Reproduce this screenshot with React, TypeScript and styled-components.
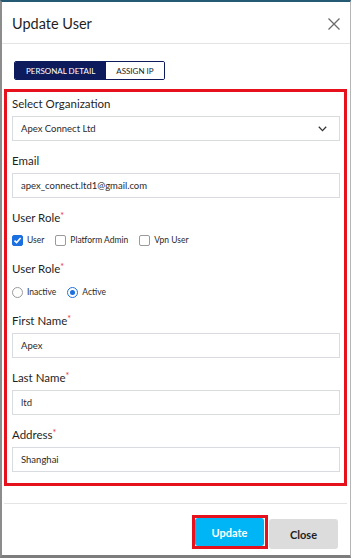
import styled, { createGlobalStyle } from "styled-components";

const GlobalStyle = createGlobalStyle`
  html, body {
    margin: 0;
    padding: 0;
    background: #ffffff;
  }
  * {
    box-sizing: border-box;
  }
`;

const Modal = styled.div`
  width: 351px;
  height: 558px;
  display: flex;
  flex-direction: column;
  background: #fff;
  border-top: 2px solid #245a74;
  border-left: 2px solid #8c8c8c;
  border-right: 1px solid #b5b5b5;
  border-bottom: 3px solid #7d7d7d;
  font-family: Lato, "Open Sans", sans-serif;
  color: #222;
`;

const Header = styled.div`
  height: 42px;
  flex-shrink: 0;
  display: flex;
  align-items: center;
  justify-content: space-between;
  padding: 2px 10px 0 10px;
  border-bottom: 1px solid #e4e4e4;
`;

const Title = styled.h2`
  margin: 0;
  font-size: 14.5px;
  font-weight: 400;
  color: #1f1f1f;
`;

const CloseIcon = styled.button`
  border: none;
  background: none;
  padding: 0;
  width: 12px;
  height: 12px;
  display: flex;
  cursor: pointer;
`;

const Body = styled.div`
  flex: 1;
  padding: 17px 3px 0 2px;
  display: flex;
  flex-direction: column;
`;

const Tabs = styled.div`
  display: flex;
  margin-left: 10px;
  margin-bottom: 9px;
  border: 1px solid #0d1b5c;
  border-radius: 2px;
  align-self: flex-start;
  overflow: hidden;
`;

const Tab = styled.button<{ active?: boolean }>`
  height: 17px;
  padding: 0 ${({ active }) => (active ? "11px" : "10px")};
  border: none;
  font-family: Lato, sans-serif;
  font-size: 8px;
  text-transform: uppercase;
  background: ${({ active }) => (active ? "#0d1b5c" : "#ffffff")};
  color: ${({ active }) => (active ? "#ffffff" : "#1a1a1a")};
  cursor: pointer;
`;

const Highlight = styled.div`
  border: 3px solid #e5121d;
  padding: 4px 4px 11px 5px;
  display: flex;
  flex-direction: column;
`;

const Field = styled.div`
  display: flex;
  flex-direction: column;
  margin-bottom: 12px;
  &:last-child {
    margin-bottom: 0;
  }
`;

const Label = styled.label`
  font-size: 11.5px;
  line-height: 16px;
  color: #1f1f1f;
  margin-bottom: 4px;
`;

const Star = styled.span`
  color: #e8343f;
  font-size: 9px;
  vertical-align: top;
  line-height: 12px;
`;

const InputBox = styled.div`
  height: 25px;
  border: 1px solid #d8dbe0;
  display: flex;
  align-items: center;
  justify-content: space-between;
  padding: 0 12px 0 8px;
  font-size: 9.5px;
  color: #2a2a2a;
`;

const OptionRow = styled.div<{ spacing: number }>`
  display: flex;
  align-items: center;
  gap: 11px;
  height: 14px;
  margin-top: ${({ spacing }) => spacing}px;
  margin-bottom: 14px;
`;

const Option = styled.div`
  display: flex;
  align-items: center;
  gap: 4px;
  font-size: 8.5px;
  color: #2a2a2a;
`;

const Box = styled.span<{ checked?: boolean }>`
  width: 11px;
  height: 11px;
  border-radius: 2px;
  border: 1px solid ${({ checked }) => (checked ? "#1b6fe0" : "#9a9a9a")};
  background: ${({ checked }) => (checked ? "#1b6fe0" : "#fff")};
  display: flex;
  align-items: center;
  justify-content: center;
`;

const Radio = styled.span<{ checked?: boolean }>`
  width: 11px;
  height: 11px;
  border-radius: 50%;
  border: 1px solid ${({ checked }) => (checked ? "#1b6fe0" : "#9a9a9a")};
  background: #fff;
  display: flex;
  align-items: center;
  justify-content: center;
  &::after {
    content: "";
    width: 5px;
    height: 5px;
    border-radius: 50%;
    background: ${({ checked }) => (checked ? "#1b6fe0" : "transparent")};
  }
`;

const Footer = styled.div`
  margin-top: 17px;
  border-top: 1px solid #e4e4e4;
  padding: 11px 9px 10px 0;
  display: flex;
  justify-content: flex-end;
  align-items: flex-end;
  gap: 1px;
`;

const Outline = styled.div`
  border: 3px solid #e5121d;
  padding: 0 1px 0 0;
  display: flex;
`;

const Button = styled.button<{ primary?: boolean }>`
  width: 69px;
  height: ${({ primary }) => (primary ? "28px" : "30px")};
  border: none;
  border-radius: 3px;
  font-family: Lato, sans-serif;
  font-weight: 700;
  font-size: 11px;
  background: ${({ primary }) => (primary ? "#00b5f5" : "#dcdcdc")};
  color: ${({ primary }) => (primary ? "#ffffff" : "#1f1f1f")};
  cursor: pointer;
`;

const Required = ({ text }: { text: string }) => (
  <Label>
    {text}
    <Star>*</Star>
  </Label>
);

export default function App() {
  return (
    <>
      <GlobalStyle />
      <Modal>
        <Header>
          <Title>Update User</Title>
          <CloseIcon aria-label="close">
            <svg width="12" height="12" viewBox="0 0 12 12">
              <path d="M0.5 0.5 L11.5 11.5 M11.5 0.5 L0.5 11.5" stroke="#6b6b6b" strokeWidth="1.3" />
            </svg>
          </CloseIcon>
        </Header>
        <Body>
          <Tabs>
            <Tab active>Personal Detail</Tab>
            <Tab>Assign IP</Tab>
          </Tabs>
          <Highlight>
            <Field>
              <Label>Select Organization</Label>
              <InputBox>
                Apex Connect Ltd
                <svg width="9" height="6" viewBox="0 0 9 6">
                  <path d="M0.8 0.8 L4.5 4.6 L8.2 0.8" fill="none" stroke="#333" strokeWidth="1.3" />
                </svg>
              </InputBox>
            </Field>
            <Field>
              <Label>Email</Label>
              <InputBox>apex_connect.ltd1@gmail.com</InputBox>
            </Field>
            <Required text="User Role" />
            <OptionRow spacing={3}>
              <Option>
                <Box checked>
                  <svg width="9" height="9" viewBox="0 0 9 9">
                    <path d="M1.5 4.6 L3.6 6.6 L7.6 2" fill="none" stroke="#fff" strokeWidth="1.6" />
                  </svg>
                </Box>
                User
              </Option>
              <Option>
                <Box />
                Platform Admin
              </Option>
              <Option>
                <Box />
                Vpn User
              </Option>
            </OptionRow>
            <Required text="User Role" />
            <OptionRow spacing={4}>
              <Option>
                <Radio />
                Inactive
              </Option>
              <Option>
                <Radio checked />
                Active
              </Option>
            </OptionRow>
            <Field>
              <Required text="First Name" />
              <InputBox>Apex</InputBox>
            </Field>
            <Field>
              <Required text="Last Name" />
              <InputBox>ltd</InputBox>
            </Field>
            <Field>
              <Required text="Address" />
              <InputBox>Shanghai</InputBox>
            </Field>
          </Highlight>
          <Footer>
            <Outline>
              <Button primary>Update</Button>
            </Outline>
            <Button>Close</Button>
          </Footer>
        </Body>
      </Modal>
    </>
  );
}
